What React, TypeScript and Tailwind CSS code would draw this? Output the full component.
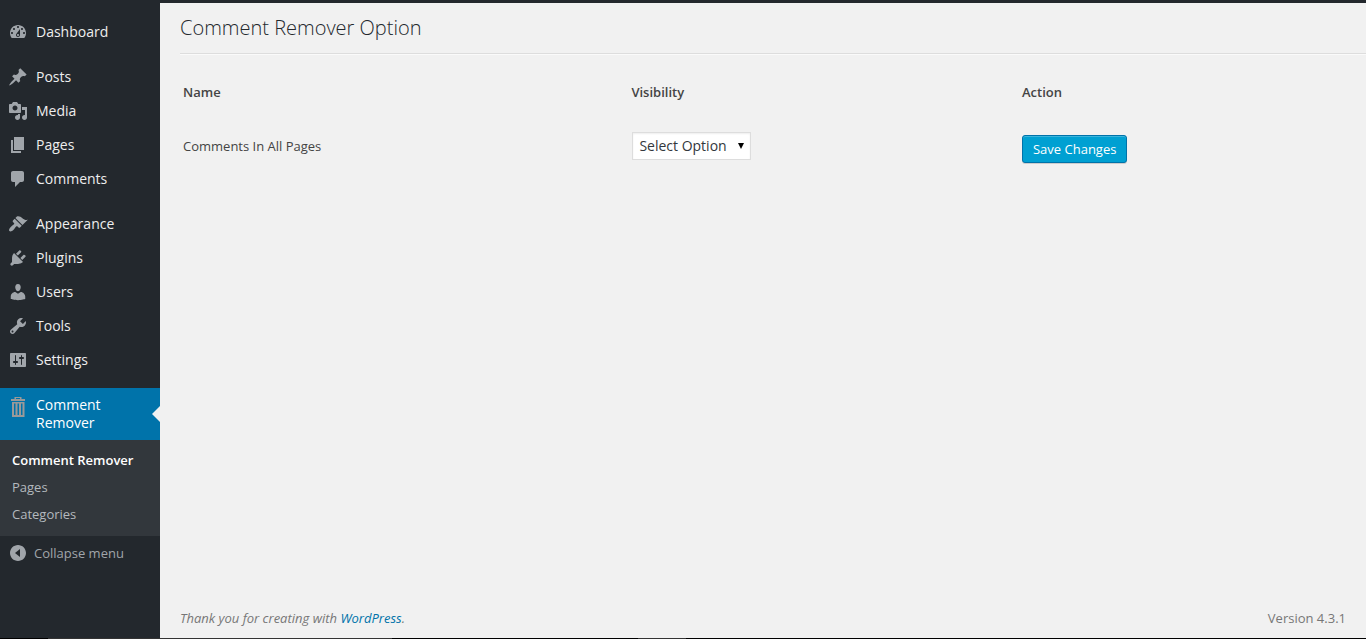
import type { ReactNode } from 'react';

const icons = {
  dashboard:
    'M3.76 16h12.48c1.1-1.37 1.76-3.11 1.76-5 0-4.42-3.58-8-8-8s-8 3.58-8 8c0 1.89.66 3.63 1.76 5zM10 4c.55 0 1 .45 1 1s-.45 1-1 1-1-.45-1-1 .45-1 1-1zM6 6c.55 0 1 .45 1 1s-.45 1-1 1-1-.45-1-1 .45-1 1-1zm8 0c.55 0 1 .45 1 1s-.45 1-1 1-1-.45-1-1 .45-1 1-1zm-5.37 5.55L12 7v6c0 1.1-.9 2-2 2s-2-.9-2-2c0-.57.24-1.08.63-1.45zM4 10c.55 0 1 .45 1 1s-.45 1-1 1-1-.45-1-1 .45-1 1-1zm12 0c.55 0 1 .45 1 1s-.45 1-1 1-1-.45-1-1 .45-1 1-1zm-5 3c0-.55-.45-1-1-1s-1 .45-1 1 .45 1 1 1 1-.45 1-1z',
  posts:
    'M10.44 3.02l1.82-1.82 6.36 6.35-1.83 1.82c-1.05-.68-2.48-.57-3.41.36l-.75.75c-.92.93-1.04 2.35-.35 3.41l-1.83 1.82-2.41-2.41-2.8 2.79c-.42.42-3.38 2.71-3.8 2.29s1.86-3.39 2.28-3.81l2.79-2.79L4.1 9.36l1.83-1.82c1.05.69 2.48.57 3.4-.36l.75-.75c.93-.92 1.05-2.35.36-3.41z',
  media:
    'M13 11V4c0-.55-.45-1-1-1h-1.67L9 1H5L3.67 3H2c-.55 0-1 .45-1 1v7c0 .55.45 1 1 1h10c.55 0 1-.45 1-1zM7 4.5c1.38 0 2.5 1.12 2.5 2.5S8.38 9.5 7 9.5 4.5 8.38 4.5 7 5.62 4.5 7 4.5zM14 6h5v10.5c0 1.38-1.12 2.5-2.5 2.5S14 17.88 14 16.5s1.12-2.5 2.5-2.5c.17 0 .34.02.5.05V9h-3V6zm-4 8.05V13h2v3.5c0 1.38-1.12 2.5-2.5 2.5S7 17.88 7 16.5 8.12 14 9.5 14c.17 0 .34.02.5.05z',
  pages: 'M6 15V2h10v13H6zm-1 1h8v2H3V5h2v11z',
  comments:
    'M5 2h9c1.1 0 2 .9 2 2v7c0 1.1-.9 2-2 2h-2l-5 5v-5H5c-1.1 0-2-.9-2-2V4c0-1.1.9-2 2-2z',
  appearance:
    'M14.48 11.06L7.41 3.99l1.5-1.5c.5-.56 2.3-.47 3.51.32 1.21.8 1.43 1.28 2.91 2.1 1.18.64 2.45 1.26 4.45.85zm-.71.71L6.7 4.7 4.93 6.47c-.39.39-.39 1.02 0 1.41l1.06 1.06c.39.39.39 1.03 0 1.42-.6.6-1.43 1.11-2.21 1.69-.35.26-.7.53-1.01.84C1.43 14.23.4 16.08 1.4 17.07c.99 1 2.84-.03 4.18-1.36.31-.31.58-.66.85-1.02.57-.78 1.08-1.61 1.69-2.21.39-.39 1.02-.39 1.41 0l1.06 1.06c.39.39 1.02.39 1.41 0z',
  plugins:
    'M13.11 4.36L9.87 7.6 8 5.73l3.24-3.24c.35-.34 1.05-.2 1.56.32.52.51.66 1.21.31 1.55zm-8 1.77l.91-1.12 9.01 9.01-1.19.84c-.71.71-2.63 1.16-3.82 1.16H6.14L4.9 17.26c-.59.59-1.54.59-2.12 0-.59-.58-.59-1.53 0-2.12l1.24-1.24v-3.88c0-1.13.4-3.19 1.09-3.89zm7.26 3.97l3.24-3.24c.34-.35 1.04-.21 1.55.31.52.51.66 1.21.31 1.55l-3.24 3.25z',
  users:
    'M10 9.25c-2.27 0-2.73-3.44-2.73-3.44C7 4.02 7.82 2 9.97 2c2.16 0 2.98 2.02 2.71 3.81 0 0-.41 3.44-2.68 3.44zm0 2.57L12.72 10c2.39 0 4.52 2.33 4.52 4.53v2.49s-3.65 1.13-7.24 1.13c-3.65 0-7.24-1.13-7.24-1.13v-2.49c0-2.25 1.94-4.48 4.47-4.48z',
  tools:
    'M16.68 9.77c-1.34 1.34-3.3 1.67-4.95.99l-5.41 6.52c-.99.99-2.59.99-3.58 0s-.99-2.59 0-3.57l6.52-5.42c-.68-1.65-.35-3.61.99-4.95 1.28-1.28 3.12-1.62 4.72-1.06l-2.89 2.89 2.82 2.82 2.86-2.87c.53 1.58.18 3.39-1.08 4.65zM3.81 16.21c.4.39 1.04.39 1.43 0 .4-.4.4-1.04 0-1.43-.39-.4-1.03-.4-1.43 0-.39.39-.39 1.03 0 1.43z',
  settings:
    'M18 16V4c0-.55-.45-1-1-1H3c-.55 0-1 .45-1 1v12c0 .55.45 1 1 1h14c.55 0 1-.45 1-1zM8 11h1c.55 0 1 .45 1 1s-.45 1-1 1H8v1.5c0 .28-.22.5-.5.5s-.5-.22-.5-.5V13H6c-.55 0-1-.45-1-1s.45-1 1-1h1V5.5c0-.28.22-.5.5-.5s.5.22.5.5V11zm5-2h-1c-.55 0-1-.45-1-1s.45-1 1-1h1V5.5c0-.28.22-.5.5-.5s.5.22.5.5V7h1c.55 0 1 .45 1 1s-.45 1-1 1h-1v5.5c0 .28-.22.5-.5.5s-.5-.22-.5-.5V9z',
  trash:
    'M6.500 1h7v2H17v2H3V3h3.500zM8 2v1h4V2zM4 6h12.500v15H4zM6 7.500V19h1.500V7.500zM9.500 7.500V19H11V7.500zM13 7.500V19h1.500V7.500z',
  collapse:
    'M10 2c4.420 0 8 3.580 8 8s-3.580 8-8 8-8-3.580-8-8 3.580-8 8-8zM12 6l-5 4 5 4z',
};

type IconName = keyof typeof icons;

function Icon({ name }: { name: IconName }) {
  return (
    <svg
      viewBox="0 0 20 20"
      className={
        name === 'trash'
          ? 'size-5 shrink-0 overflow-visible text-[#999999]'
          : 'size-5 shrink-0 text-[#a0a5aa]'
      }
      fill="currentColor"
      fillRule="evenodd"
      aria-hidden="true"
    >
      <path d={icons[name]} />
    </svg>
  );
}

const groups: { label: string; icon: IconName }[][] = [
  [{ label: 'Dashboard', icon: 'dashboard' }],
  [
    { label: 'Posts', icon: 'posts' },
    { label: 'Media', icon: 'media' },
    { label: 'Pages', icon: 'pages' },
    { label: 'Comments', icon: 'comments' },
  ],
  [
    { label: 'Appearance', icon: 'appearance' },
    { label: 'Plugins', icon: 'plugins' },
    { label: 'Users', icon: 'users' },
    { label: 'Tools', icon: 'tools' },
    { label: 'Settings', icon: 'settings' },
  ],
];

function SubItem({ children, current = false }: { children: ReactNode; current?: boolean }) {
  return (
    <li>
      <a
        href="#"
        className={
          current
            ? 'block px-3 py-1 text-[13px] leading-[19px] font-semibold text-white'
            : 'block px-3 py-1 text-[13px] leading-[19px] text-[#b4b9be]'
        }
      >
        {children}
      </a>
    </li>
  );
}

function Sidebar() {
  return (
    <nav aria-label="Main menu" className="w-40 shrink-0 bg-[#23282d] pt-3">
      <div className="flex flex-col gap-[11px]">
        {groups.map((group) => (
          <ul key={group[0].label}>
            {group.map((item) => (
              <li key={item.label}>
                <a href="#" className="flex gap-2 px-2 py-[7px] text-sm text-[#eeeeee]">
                  <Icon name={item.icon} />
                  {item.label}
                </a>
              </li>
            ))}
          </ul>
        ))}
        <div>
          <a href="#" className="relative flex gap-2 bg-[#0073aa] px-2 py-2 text-sm leading-[18px] text-white">
            <Icon name="trash" />
            Comment Remover
            <span className="absolute top-1/2 right-0 -mt-2 border-y-8 border-r-8 border-y-transparent border-r-[#f1f1f1]" />
          </a>
          <ul className="bg-[#32373c] pt-[7px] pb-2">
            <SubItem current>Comment Remover</SubItem>
            <SubItem>Pages</SubItem>
            <SubItem>Categories</SubItem>
          </ul>
        </div>
      </div>
      <button type="button" className="flex items-center gap-1.5 px-2 py-[7px] text-[13px] leading-5 text-[#a0a5aa]">
        <Icon name="collapse" />
        Collapse menu
      </button>
    </nav>
  );
}

export default function App() {
  return (
    <div className="flex min-h-screen flex-col bg-[#f1f1f1] font-['Open_Sans',sans-serif] text-[13px] text-[#444444]">
      <div className="h-[3px] bg-[#23282d]" />
      <div className="flex grow">
        <Sidebar />
        <div className="flex grow flex-col pl-5">
          <main className="grow">
            <h1 className="border-b border-[#dddddd] pt-2.5 pb-2.5 text-xl leading-[30px] font-[340] text-[#23282d]">
              Comment Remover Option
            </h1>
            <div className="border-t border-[#fafafa] pt-[23px] pr-1.5">
              <table className="w-full table-fixed text-left">
                <thead>
                  <tr>
                    <th className="w-[38%] px-[3px] py-1 leading-5 font-semibold">Name</th>
                    <th className="w-[33.1%] px-[3px] py-1 leading-5 font-semibold">Visibility</th>
                    <th className="px-[3px] py-1 leading-5 font-semibold">Action</th>
                  </tr>
                </thead>
                <tbody>
                  <tr>
                    <td className="px-[3px] pt-6">
                      <label htmlFor="visibility">Comments In All Pages</label>
                    </td>
                    <td className="px-1 pt-[26px] pb-1 align-top">
                      <div className="relative inline-block align-middle">
                        <select
                          id="visibility"
                          className="block h-7 w-[119px] appearance-none border border-[#dddddd] bg-white pl-1.5 text-sm leading-5 text-[#32373c] shadow-[inset_0_1px_2px_rgba(0,0,0,0.07)]"
                        >
                          <option>Select Option</option>
                          <option>Show</option>
                          <option>Hide</option>
                        </select>
                        <svg viewBox="0 0 6 6" className="pointer-events-none absolute top-[11px] right-[7px] size-1.5" aria-hidden="true">
                          <path d="M0 0h6L3 6z" />
                        </svg>
                      </div>
                    </td>
                    <td className="px-[3px] pt-[29px] align-top">
                      <button
                        type="button"
                        className="block h-7 rounded-[3px] border border-[#0073aa] bg-[#00a0d2] px-2.5 text-[13px] leading-[26px] text-white shadow-[inset_0_1px_0_rgba(120,200,230,0.5),0_1px_0_rgba(0,0,0,0.15)]"
                      >
                        Save Changes
                      </button>
                    </td>
                  </tr>
                </tbody>
              </table>
            </div>
          </main>
          <footer className="flex justify-between pt-2.5 pr-5 pb-2.5 leading-5 text-[#777777]">
            <p className="italic">
              Thank you for creating with{' '}
              <a href="#" className="text-[#0073aa]">
                WordPress
              </a>
              .
            </p>
            <p>Version 4.3.1</p>
          </footer>
        </div>
      </div>
      <div className="flex h-px bg-black pl-12">
        <div className="w-[344px] bg-[#333333]" />
        <div className="ml-[246px] w-12 bg-[#333333]" />
      </div>
    </div>
  );
}
